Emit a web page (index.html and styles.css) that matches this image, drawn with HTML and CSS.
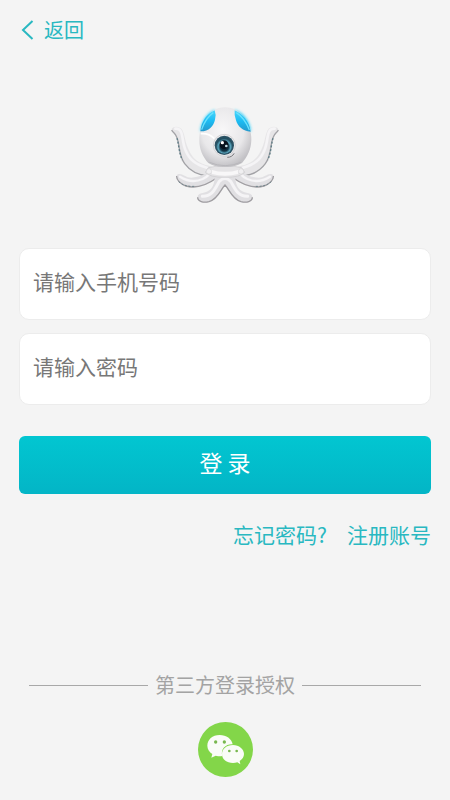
FILE: index.html
```
<!DOCTYPE html>
<html lang="zh-CN">
<head>
    <meta charset="UTF-8">
    <meta name="viewport" content="width=device-width, initial-scale=1.0">
    <title>登录</title>
    <link rel="stylesheet" href="styles.css">
</head>
<body>
    <header>
        <a class="back" href="#">
            <svg class="back-icon" width="14" height="20" viewBox="0 0 14 20" aria-hidden="true">
                <path d="M12.5 1 L3 10 L12.5 19" fill="none" stroke="currentColor" stroke-width="2"/>
            </svg>
            返回
        </a>
    </header>

    <main class="container">
        <svg class="logo" viewBox="0 0 390 345" role="img" aria-label="logo">
            <defs>
                <radialGradient id="headFill" cx="45%" cy="38%" r="62%">
                    <stop offset="0" stop-color="#f8f7f8"/>
                    <stop offset="0.65" stop-color="#e9e8ea"/>
                    <stop offset="1" stop-color="#c2c1c5"/>
                </radialGradient>
                <linearGradient id="blueFill" x1="0" y1="0" x2="0" y2="1">
                    <stop offset="0" stop-color="#4bd6fb"/>
                    <stop offset="0.5" stop-color="#1cbcf3"/>
                    <stop offset="1" stop-color="#2599cc"/>
                </linearGradient>
                <radialGradient id="irisFill" cx="50%" cy="60%" r="50%">
                    <stop offset="0" stop-color="#07131d"/>
                    <stop offset="0.5" stop-color="#123546"/>
                    <stop offset="0.75" stop-color="#5aa5bd"/>
                    <stop offset="1" stop-color="#244f61"/>
                </radialGradient>
                <filter id="glow" x="-40%" y="-40%" width="180%" height="180%">
                    <feGaussianBlur stdDeviation="5"/>
                </filter>
                <filter id="soft" x="-20%" y="-20%" width="140%" height="140%">
                    <feGaussianBlur stdDeviation="2"/>
                </filter>
            </defs>

            <g id="arm">
                <!-- upper arm -->
                <path d="M35 103 C37 93 60 92 68 107 C75 121 75 138 81 152 C89 172 98 190 118 202 C130 209 143 212 157 215 L150 243 C118 243 89 228 73 205 C55 180 60 148 49 124 C44 114 36 113 35 103Z" fill="#e6e5e7"/>
                <path d="M35 105 C39 114 46 114 50 126 C60 148 55 180 74 206 C90 228 118 242 148 243" fill="none" stroke="#a3a3a7" stroke-width="4" filter="url(#soft)"/>
                <path d="M46 101 C72 98 64 137 76 164 C88 194 106 209 143 219" fill="none" stroke="#f5f4f6" stroke-width="8" stroke-linecap="round" filter="url(#soft)"/>
                <path d="M51 130 C57 148 56 172 67 195" fill="none" stroke="#5f7d87" stroke-width="4" stroke-dasharray="6 5"/>
                <!-- middle arm -->
                <path d="M154 217 C140 239 119 247 94 248 C77 248 68 235 56 237 C44 240 49 255 58 263 C76 280 109 281 135 270 C153 262 167 252 179 240Z" fill="#e1e0e3"/>
                <path d="M50 243 C49 254 61 267 78 273 C109 282 142 269 171 248" fill="none" stroke="#a19fa3" stroke-width="4" filter="url(#soft)"/>
                <path d="M60 245 C79 257 103 263 128 252 C143 245 149 236 159 227" fill="none" stroke="#f6f5f7" stroke-width="7" stroke-linecap="round" filter="url(#soft)"/>
                <path d="M56 260 C68 271 84 275 104 274" fill="none" stroke="#71858c" stroke-width="3" stroke-dasharray="6 5"/>
            </g>
            <use href="#arm" transform="translate(390 0) scale(-1 1)"/>

            <!-- lower arms -->
            <path d="M163 237 C166 257 161 279 143 289 C130 296 115 293 113 305 C110 319 126 325 144 322 C175 316 181 287 195 270 C209 287 216 316 246 322 C264 325 280 319 277 305 C275 293 260 296 247 289 C229 279 224 257 227 237Z" fill="#e0dfe2"/>
            <path d="M113 307 C113 320 130 324 147 320 C174 313 182 283 195 270 C208 283 216 313 243 320 C260 324 277 320 277 307" fill="none" stroke="#9f9da1" stroke-width="4" filter="url(#soft)"/>
            <path d="M127 304 C157 305 166 280 178 259 Q195 242 212 259 C224 280 233 305 263 304" fill="none" stroke="#f5f4f6" stroke-width="9" stroke-linecap="round" filter="url(#soft)"/>

            <!-- collar -->
            <path d="M145 218 Q195 206 245 218 L254 232 Q242 247 195 247 Q148 247 136 232Z" fill="#e5e4e6" stroke="#cbcacd" stroke-width="2"/>
            <path d="M153 224 Q195 237 237 224 L234 237 Q195 248 156 237Z" fill="#f8f7f8"/>
            <circle cx="147" cy="229" r="8" fill="#f0eff1" stroke="#c4c4c6" stroke-width="1"/>
            <circle cx="243" cy="229" r="8" fill="#f0eff1" stroke="#c4c4c6" stroke-width="1"/>

            <!-- head -->
            <path d="M165 45 C143 51 124 78 121 108 L150 108 L168 60Z M223 45 C248 51 269 75 273 108 L242 108 L222 60Z" fill="#2bd0fb" filter="url(#glow)"/>
            <path d="M195 37 C216 37 235 46 249 63 C265 83 275 111 274 135 C273 164 263 184 246 204 Q222 218 195 216 Q167 218 145 204 C128 185 118 162 118 137 C117 109 127 82 142 63 C155 46 174 37 195 37Z" fill="url(#headFill)"/>
            <path d="M164 46 C141 56 124 80 121 109 C145 110 161 94 165 74 Q169 58 164 46Z" fill="url(#blueFill)"/>
            <path d="M224 46 C248 56 267 79 272 110 C249 109 233 94 228 76 Q222 61 224 46Z" fill="url(#blueFill)"/>
            <path d="M160 53 Q136 70 125 104 M229 53 Q255 70 268 105" fill="none" stroke="#69e1fd" stroke-width="4"/>
            <path d="M122 116 Q148 114 163 131" fill="none" stroke="#fff" stroke-width="5" filter="url(#soft)"/>
            <path d="M148 202 Q195 222 243 202" fill="none" stroke="#b8b7bb" stroke-width="3" filter="url(#soft)"/>

            <!-- eye -->
            <circle cx="193" cy="151" r="33" fill="#eeedef" stroke="#c7c5c8" stroke-width="2"/>
            <circle cx="193" cy="151" r="29" fill="#2d5365"/>
            <circle cx="193" cy="151" r="25" fill="url(#irisFill)"/>
            <circle cx="192" cy="149" r="13" fill="#07121c"/>
            <circle cx="187" cy="143" r="5" fill="#fff"/>
            <circle cx="199" cy="153" r="4" fill="#c6dfe6"/>
            <path d="M203 187 Q216 187 222 176" fill="none" stroke="#77767a" stroke-width="3" stroke-linecap="round"/>
        </svg>

        <form class="login-form">
            <input type="tel" id="phoneInput" aria-label="手机号码" placeholder="请输入手机号码">
            <input type="password" id="passwordInput" aria-label="密码" placeholder="请输入密码">
            <button type="submit">登 录</button>
        </form>

        <div class="link-section">
            <a href="#">忘记密码?</a>
            <a href="#">注册账号</a>
        </div>
    </main>

    <footer>
        <div class="divider">第三方登录授权</div>
        <button class="wechat" type="button" aria-label="微信登录">
            <svg viewBox="0 0 165 165" aria-hidden="true">
                <circle cx="82.5" cy="82.5" r="82.5" fill="#83d649"/>
                <path d="M65 39 C43 39 28 53 28 71 C28 82 34 90 43 96 L40 107 L53 101 Q60 103 69 103 L73 102 C67 81 83 66 104 67 C101 50 85 39 65 39Z" fill="#fafcf8"/>
                <path d="M105 69 C85 69 72 81 72 96 C72 112 86 123 105 123 Q112 123 118 121 L127 127 L125 117 C133 112 138 105 138 96 C138 81 123 69 105 69Z" fill="#fafcf8"/>
                <circle cx="53" cy="60" r="5" fill="#79b850"/>
                <circle cx="79" cy="60" r="5" fill="#79b850"/>
                <circle cx="94" cy="87" r="4" fill="#79b850"/>
                <circle cx="116" cy="87" r="4" fill="#79b850"/>
            </svg>
        </button>
    </footer>
</body>
</html>
```
FILE: styles.css
```
* {
    box-sizing: border-box;
}
body {
    font-family: "Noto Sans CJK SC", sans-serif;
    margin: 0;
    min-height: 100vh;
    display: flex;
    flex-direction: column;
    background-color: #f4f4f4;
}
a {
    color: #29b8c1;
    text-decoration: none;
}
header {
    height: 60px;
    padding: 0 20px;
    display: flex;
    align-items: center;
}
.back {
    display: flex;
    align-items: center;
    gap: 10px;
    font-size: 20px;
    line-height: 30px;
}
.back-icon {
    flex: none;
}
.container {
    padding: 35px 19px 0;
}
.logo {
    display: block;
    width: 130px;
    margin: 0 auto 38px;
}
.login-form {
    display: flex;
    flex-direction: column;
}
.login-form input {
    width: 100%;
    height: 72px;
    margin: 0 0 13px;
    padding: 0 13px 6px;
    border: 1px solid #ececec;
    border-radius: 10px;
    background: #fff;
    color: #333;
    font-family: inherit;
    font-size: 21px;
}
.login-form input::placeholder {
    color: #777;
    opacity: 1;
}
.login-form button {
    height: 58px;
    margin-top: 18px;
    padding: 0 0 6px;
    border: none;
    border-radius: 6px;
    background: linear-gradient(#02c6d1, #03b5c6);
    color: #fff;
    font-family: inherit;
    font-size: 23px;
    cursor: pointer;
}
.link-section {
    display: flex;
    justify-content: flex-end;
    gap: 20px;
    margin-top: 24px;
    font-size: 21px;
    line-height: 32px;
}
footer {
    margin-top: auto;
    padding: 0 29px 23px;
}
.divider {
    display: flex;
    align-items: center;
    gap: 7px;
    margin-bottom: 22px;
    color: #a3a3a3;
    font-size: 20px;
    line-height: 30px;
}
.divider::before,
.divider::after {
    content: "";
    flex: 1;
    height: 1px;
    background: #a8a8a8;
}
.wechat {
    display: block;
    width: 55px;
    height: 55px;
    margin: 0 auto;
    padding: 0;
    border: none;
    border-radius: 50%;
    background: none;
    cursor: pointer;
}
.wechat svg {
    display: block;
    width: 100%;
}
```
